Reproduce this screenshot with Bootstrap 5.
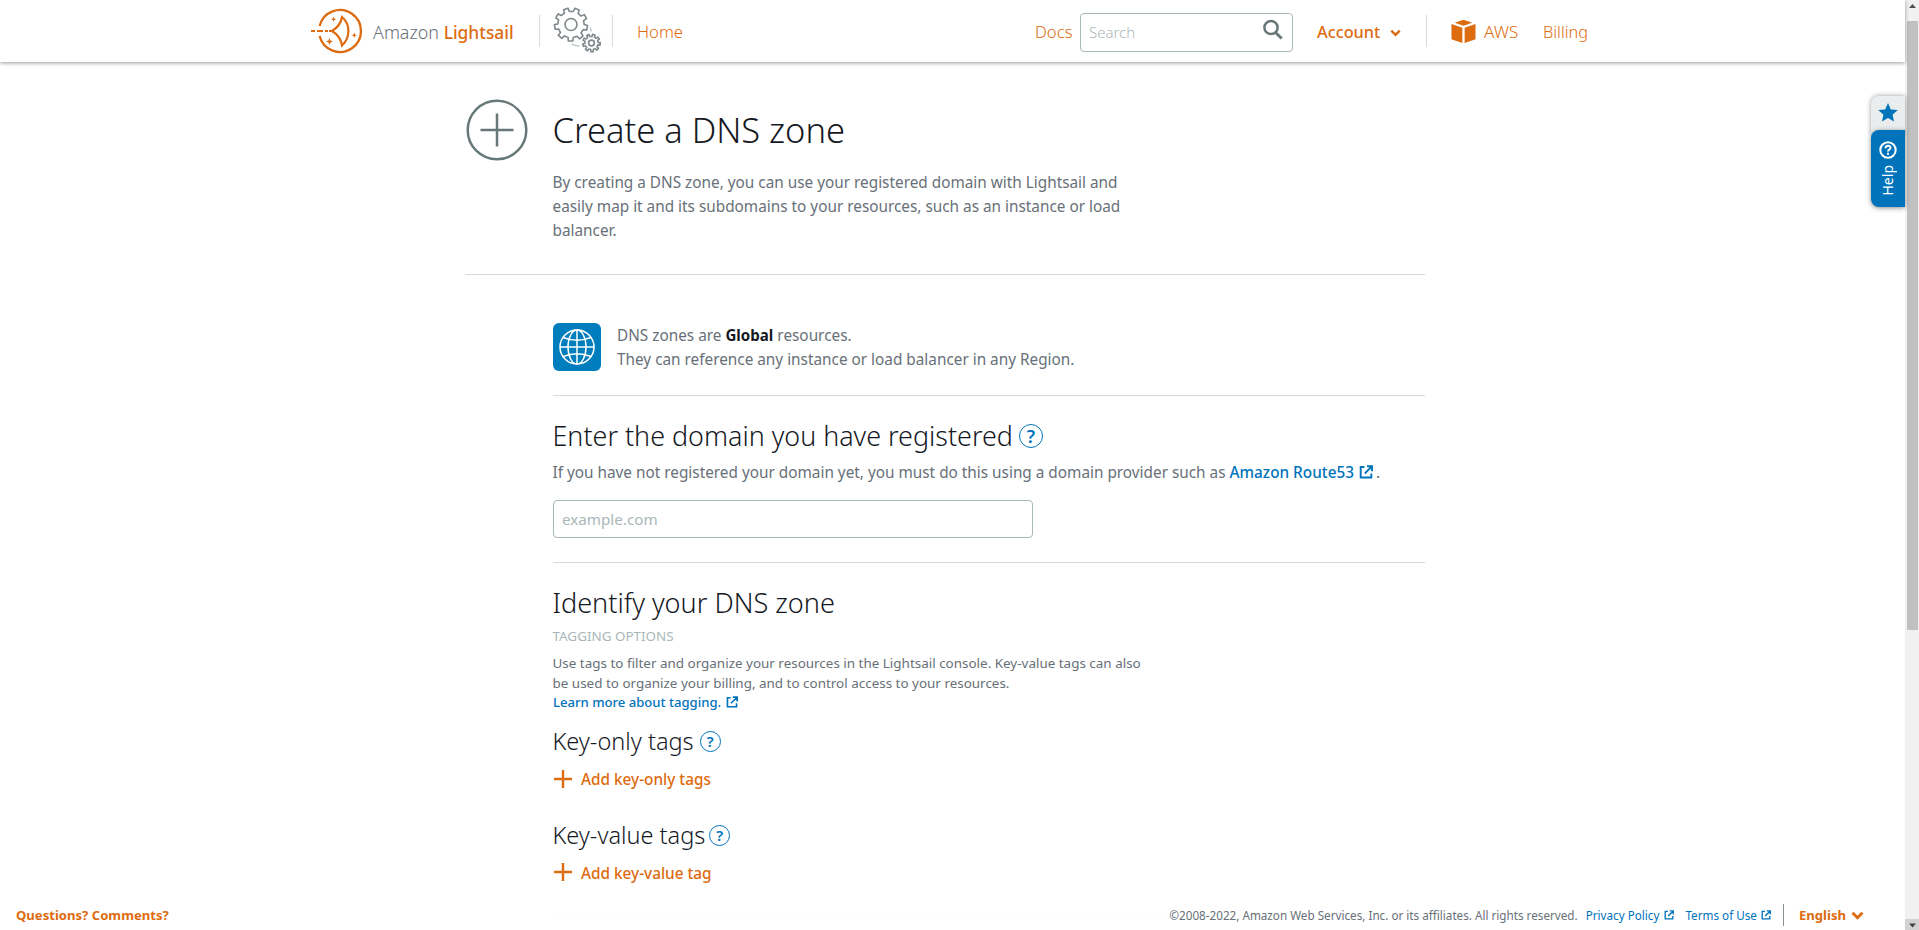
<!DOCTYPE html>
<html lang="en">
<head>
<meta charset="utf-8">
<title>Create a DNS zone</title>
<link href="https://cdn.jsdelivr.net/npm/bootstrap@5.3.0/dist/css/bootstrap.min.css" rel="stylesheet">
<style>
body{font-family:"Noto Sans",sans-serif;font-size:15.33px;line-height:24px;color:#687078;background:#fff;height:100vh;overflow:hidden}
a{text-decoration:none;color:#0073bb}
svg{display:block;flex:none}
h1,h2,h3,p{margin:0;white-space:nowrap}
h1,h2,h3{font-weight:300;color:#16191f}
.orange,.orange a{color:#dd6b10}
.topbar{height:62px;padding-left:311px;box-shadow:0 1px 4px rgba(0,0,0,.4);white-space:nowrap;font-size:16.7px;font-weight:300;background:#fff;position:relative}
.topbar>a,.brand{padding-top:2px}
.brand{width:166px;margin-left:10px;font-size:17.9px;color:#687078}
.brand b{font-weight:500;font-size:17.36px;color:#dd6b10}
.rule{width:1px;height:32px;background:#d5dbdb}
.searchbox{width:213px;height:39px;margin-top:2px;border:1px solid #aab7b8;border-radius:4px;padding:0 8px;color:#aab7b8;font-size:15px}
.main{padding:37px 0 0 465px;width:1425px}
.indent{padding-left:88px}
.indent h2,.indent h3,.indent p{margin-left:-.5px}
h1{font-size:34.5px;line-height:40px;margin-top:11px}
h2{font-size:26.9px;line-height:32px}
h3{font-size:23.5px;line-height:28px}
.line{height:1px;background:#d5dbdb}
.globe{width:48px;height:48px;border-radius:6px;background:#007dbc}
.field{width:480px;height:38px;border:1px solid #aab7b8;border-radius:4px;padding:0 8px;margin-top:16px;font-size:15.2px;color:#16191f}
.field::placeholder{color:#aab7b8;opacity:1}
.fine{font-size:13.45px;line-height:20px}
.fw-mid{font-weight:500}
.qmark{width:24px;height:24px;border:1px solid #0073bb;border-radius:50%;color:#0073bb;font-size:18px;font-weight:600;line-height:1}
.qmark.sm{width:21px;height:21px;font-size:15px}
.foot{position:absolute;left:0;right:14px;bottom:0;height:30px;background:rgba(255,255,255,.9);font-size:11.7px;white-space:nowrap;padding:0 41px 0 16px}
.foot b{font-size:13.1px}
.side{position:absolute;right:14px;top:96px;width:34px}
.star{height:38px;margin-bottom:-4px;padding-bottom:6px;background:#eaeded;border-radius:8px 0 0 0;box-shadow:0 0 5px rgba(0,0,0,.4)}
.help{height:77px;background:#0073bb;color:#fff;border-radius:8px 0 0 8px;box-shadow:0 1px 5px rgba(0,0,0,.45);padding-top:11px;position:relative}
.help span{writing-mode:vertical-rl;transform:rotate(180deg);font-size:14px;line-height:18px;margin-top:6px}
.track{width:14px;background:#f1f1f1}
.thumb{height:609px;width:11px;background:#c1c1c1;margin-left:2px}
</style>
<script src="https://cdn.jsdelivr.net/npm/bootstrap@5.3.0/dist/js/bootstrap.bundle.min.js"></script>
</head>
<body class="d-flex position-relative">
<svg width="0" height="0" class="position-absolute">
<symbol id="ext" viewBox="0 0 14 14"><path d="M5.500 2H1.700v10.500h10.600V8.500M8 1.300h5v5M12.600 1.700L5.800 8.500" fill="none" stroke="currentColor" stroke-width="1.900"/></symbol>
<symbol id="plus" viewBox="0 0 18 18"><path d="M9 0v18M0 9h18" stroke="currentColor" stroke-width="2.400"/></symbol>
<symbol id="chev" viewBox="0 0 12 8"><path d="M1.400 1.400L6 6l4.600-4.600" fill="none" stroke="currentColor" stroke-width="2.600"/></symbol>
</svg>
<div class="flex-grow-1">
<header class="topbar d-flex align-items-center orange">
<svg width="52" height="46" viewBox="311 8 52 46" fill="none" stroke="#dd6b10">
<path d="M319.600 26A21 21 0 1 1 319.600 36" stroke-width="2.300"/>
<path d="M311 31h4M317 31h6M325 31h3M329 31h4" stroke-width="1.800"/>
<path d="M332 31C337 28 341 23 342 17C350.500 24 350.500 38 342 45.500C341 39 337 34 332 31Z" stroke-width="2.200"/>
<g fill="#dd6b10" stroke="none"><path d="M333.500 16.500l.7 2 2 .7-2 .7-.7 2-.7-2-2-.7 2-.7z"/><path d="M329.500 38l1 2.500 2.500 1-2.500 1-1 2.500-1-2.500-2.500-1 2.500-1z"/><path d="M354.300 32.500l.7 2 2 .7-2 .7-.7 2-.7-2-2-.7 2-.7z"/></g>
</svg>
<div class="brand">Amazon <b>Lightsail</b></div>
<div class="rule"></div>
<svg id="gears" width="50" height="48" viewBox="553 7 50 48" style="margin-left:13px" fill="none" stroke="#7f888b"><circle cx="571" cy="24.500" r="6"/><circle cx="591.500" cy="43" r="2.900"/><path d="M571.500 44q3.500 2 8 2M590 27.500q1 2 1.500 4" stroke="#c5cbcb"/></svg>
<div class="rule" style="margin-left:9px"></div>
<a style="margin-left:24px;width:398px">Home</a>
<a style="width:45px">Docs</a>
<div class="searchbox d-flex align-items-center justify-content-between">Search
<svg width="22" height="22" viewBox="0 0 22 22" style="margin-bottom:4px" fill="none" stroke="#687878"><circle cx="9" cy="8.500" r="6.600" stroke-width="2.500"/><path d="M13.500 13.500l6.200 6" stroke-width="3"/></svg></div>
<a class="fw-mid" style="margin-left:24px;width:73px;font-size:16.300px">Account</a>
<svg width="11" height="8" style="margin-top:4px"><use href="#chev"/></svg>
<div class="rule" style="margin-left:25px"></div>
<svg style="margin:0 8px 0 24px" width="25" height="25" viewBox="0 0 25 26" fill="#dd6b10"><path d="M12.500.7L21.600 4 12.500 7 3.400 4zM0 5.200L11.300 9v16L0 21zM25 5.200L13.700 9v16L25 21z"/></svg>
<a style="width:59px;font-size:17px">AWS</a><a style="font-size:16.300px">Billing</a>
</header>
<main class="main">
<div class="d-flex">
<svg width="62" height="62" style="margin-left:1px" fill="none" stroke="#687878" stroke-width="2.500"><circle cx="31" cy="31" r="29.300"/><path d="M31 14.500v33M14.500 31h33"/></svg>
<div style="margin-left:24.500px"><h1>Create a DNS zone</h1>
<p style="margin-top:20px">By creating a DNS zone, you can use your registered domain with Lightsail and<br>easily map it and its subdomains to your resources, such as an instance or load<br>balancer.</p></div>
</div>
<div class="line" style="margin:32px 0 48px"></div>
<div class="indent">
<div class="d-flex">
<div class="globe d-flex align-items-center justify-content-center"><svg width="36" height="36" viewBox="-18 -18 36 36" fill="none" stroke="#fff" stroke-width="1.500"><circle r="17"/><ellipse rx="9" ry="17"/><path d="M0-17V17M-17 0H17M-14-9.500Q0-4 14-9.500M-14 9.500Q0 4 14 9.500"/></svg></div>
<p style="margin-left:16px">DNS zones are <b style="color:#16191f;font-size:15.100px">Global</b> resources.<br>They can reference any instance or load balancer in any Region.</p>
</div>
<div class="line" style="margin:24px 0"></div>
<div class="d-flex align-items-center"><h2>Enter the domain you have registered</h2><span class="qmark d-flex align-items-center justify-content-center" style="margin-left:6px">?</span></div>
<p class="d-flex align-items-center" style="margin-top:8px">If you have not registered your domain yet, you must do this using a domain provider such as&nbsp;<a class="fw-mid">Amazon Route53</a><svg width="14" height="14" style="margin:0 3px 1px 5px;color:#0073bb"><use href="#ext"/></svg>.</p>
<input class="field d-block" placeholder="example.com" aria-label="Domain">
<div class="line" style="margin:24px 0"></div>
<h2 style="font-size:27.100px">Identify your DNS zone</h2>
<p class="fine" style="margin-top:7px;color:#aab7b8">TAGGING OPTIONS</p>
<p class="fine" style="margin-top:7px">Use tags to filter and organize your resources in the Lightsail console. Key-value tags can also<br>be used to organize your billing, and to control access to your resources.</p>
<a class="fine fw-mid d-flex align-items-center" style="font-size:13.100px;margin-top:-1px">Learn more about tagging.<svg width="12" height="12" style="margin-left:5px"><use href="#ext"/></svg></a>
<div class="d-flex align-items-center" style="margin-top:15px"><h3>Key-only tags</h3><span class="qmark sm d-flex align-items-center justify-content-center" style="margin-left:6px">?</span></div>
<div class="d-flex align-items-center orange fw-mid" style="margin-top:12px"><svg width="18" height="18" style="margin:0 9px 0 1px"><use href="#plus"/></svg>Add key-only tags</div>
<div class="d-flex align-items-center" style="margin-top:30px"><h3>Key-value tags</h3><span class="qmark sm d-flex align-items-center justify-content-center" style="margin-left:4px">?</span></div>
<div class="d-flex align-items-center orange fw-mid" style="margin-top:12px"><svg width="18" height="18" style="margin:0 9px 2px 1px"><use href="#plus"/></svg>Add key-value tag</div>
<div class="line" style="margin-top:30px"></div>
</div>
</main>
</div>
<div class="track d-flex flex-column justify-content-between">
<div><svg width="14" height="21"><path d="M4 8h7L7.500 4z" fill="#505050"/></svg><div class="thumb"></div></div>
<svg width="14" height="11" style="background:#d2d2d2"><path d="M4 4.500h7L7.500 8.500z" fill="#404040"/></svg>
</div>
<aside class="side"><div class="star d-flex align-items-center justify-content-center"><svg width="20" height="19" viewBox="0 0 20 19" fill="#0073bb"><path d="M10 0l2.800 6.400 7 .7-5.300 4.600 1.600 6.900L10 15l-6.100 3.600 1.600-6.900L.2 7.100l7-.7z"/></svg></div>
<div class="help d-flex flex-column align-items-center"><svg width="18" height="18" viewBox="0 0 18 18" fill="none" stroke="#fff" stroke-width="2"><circle cx="9" cy="9" r="7.700"/><path d="M6.500 7.200c0-3.300 5-3.200 5-.3 0 1.600-2.500 1.700-2.500 3.600M9 11.800v2"/></svg><span>Help</span></div></aside>
<footer class="foot d-flex align-items-center">
<b class="orange me-auto" style="margin-top:-1px">Questions? Comments?</b>
<span>©2008-2022, Amazon Web Services, Inc. or its affiliates. All rights reserved.</span>
<a class="d-flex align-items-center" style="margin-left:8px">Privacy Policy<svg width="10" height="10" style="margin-left:5px"><use href="#ext"/></svg></a>
<a class="d-flex align-items-center" style="margin-left:11px">Terms of Use<svg width="10" height="10" style="margin-left:4px"><use href="#ext"/></svg></a>
<i style="width:1px;height:22px;background:#879196;margin:0 15px 0 12px"></i>
<b class="orange">English</b><svg width="13" height="9" style="margin-left:5px;color:#dd6b10"><use href="#chev"/></svg>
</footer>
<script>
// Toothed wheel outline: each tooth is a flat top joined to the root circle.
function gear(cx,cy,outer,root,teeth,turn){
  let d='';
  for(let i=0;i<teeth;i++)[[-.28,root],[-.2,outer],[.2,outer],[.28,root]].forEach(([o,r],k)=>{
    const a=(i+o)/teeth*2*Math.PI+turn;
    d+=(i||k?'L':'M')+(cx+r*Math.cos(a)).toFixed(2)+' '+(cy+r*Math.sin(a)).toFixed(2);
  });
  const p=document.createElementNS('http://www.w3.org/2000/svg','path');
  p.setAttribute('d',d+'Z');p.setAttribute('stroke-linejoin','round');
  return p;
}
const g=document.getElementById('gears');
g.setAttribute('stroke-width','1.6');
g.append(gear(571,24.5,16.6,13.2,9,.2),gear(591.5,43,8.8,6.6,9,.1));
</script>
</body>
</html>
